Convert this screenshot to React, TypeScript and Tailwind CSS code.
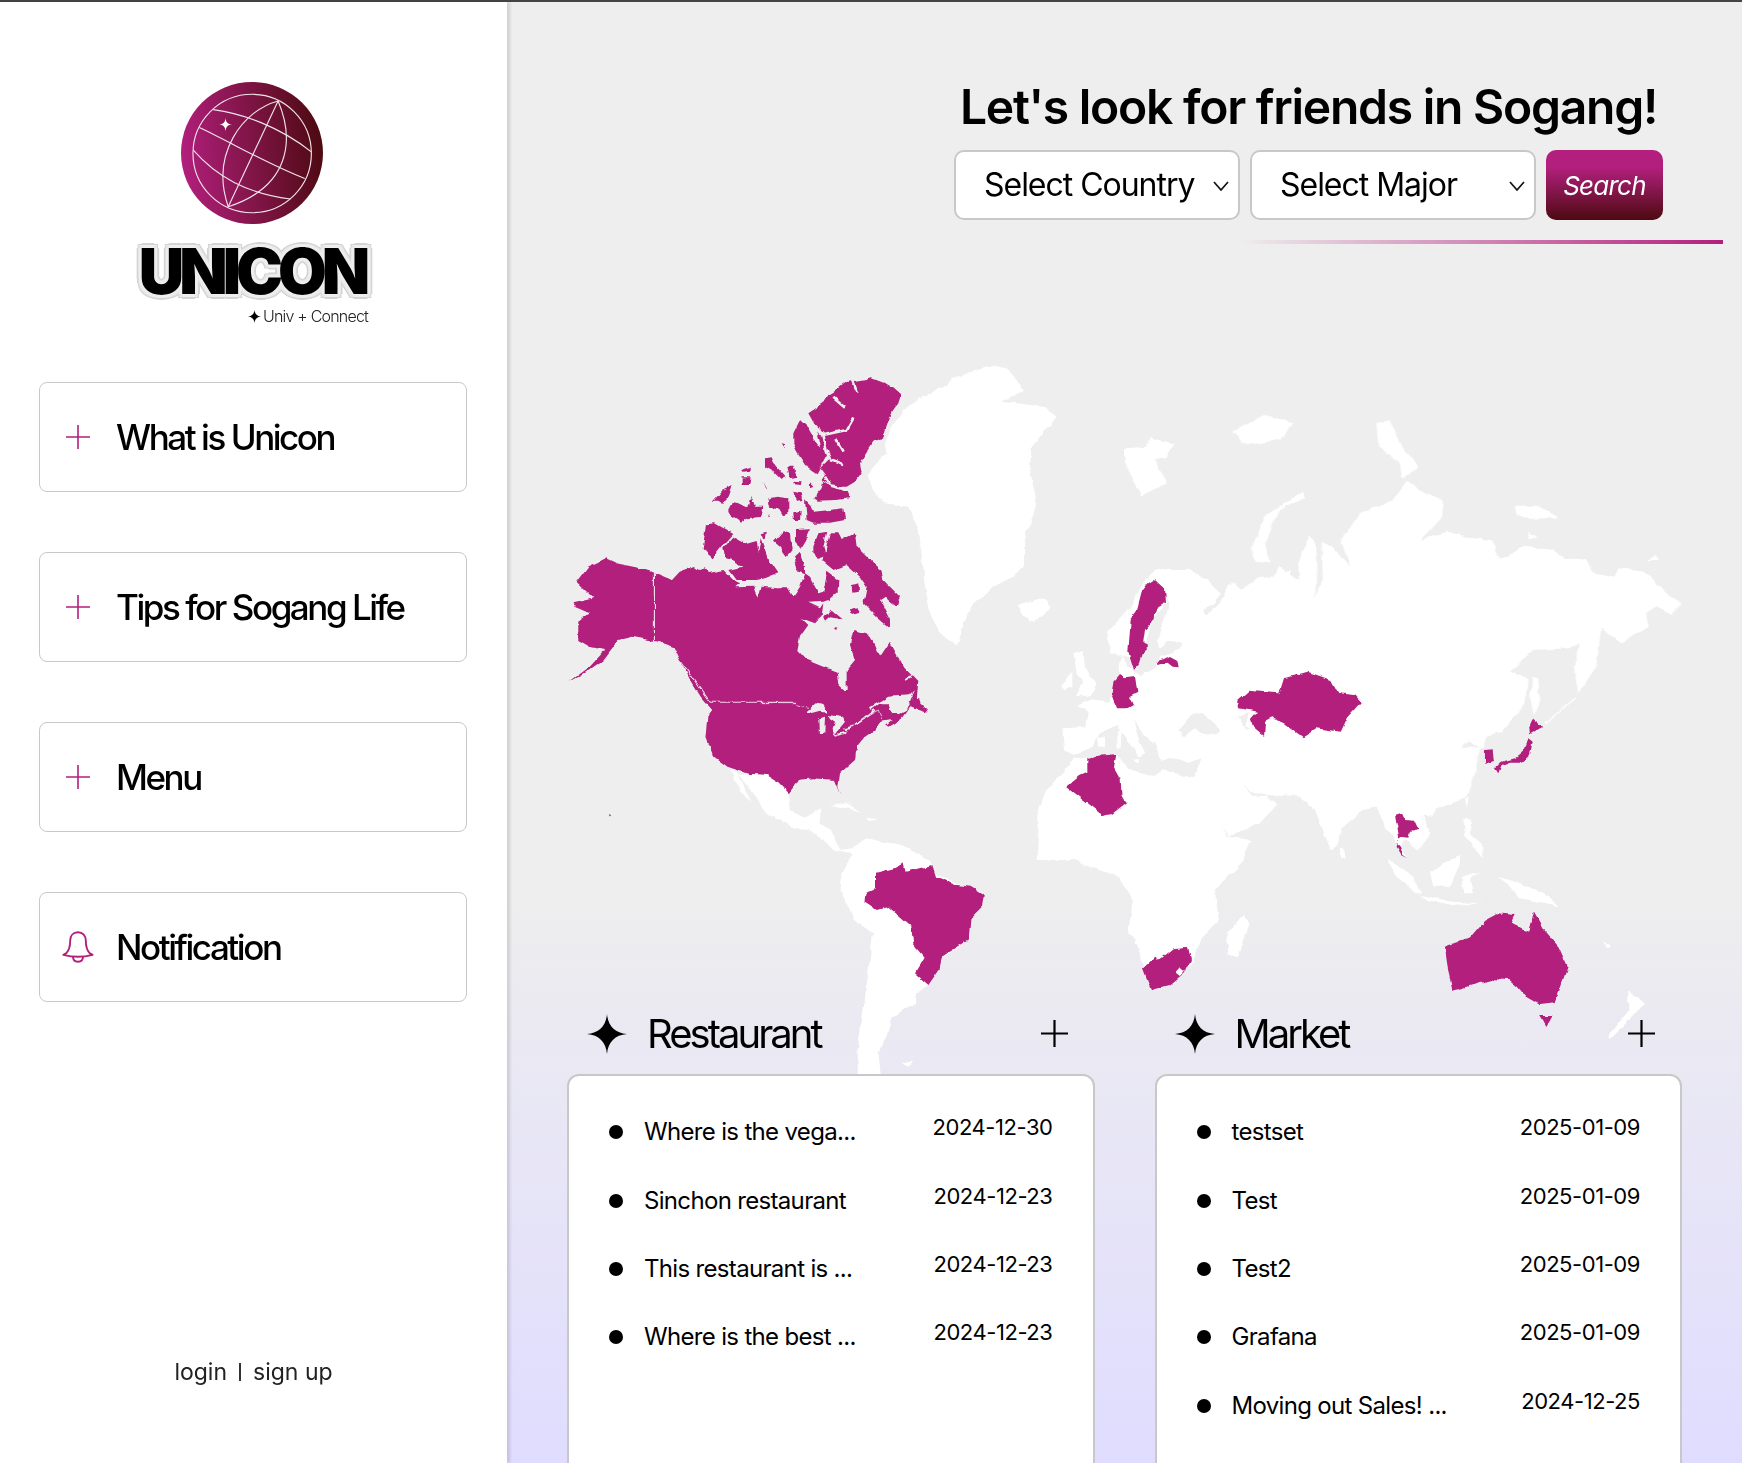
import React from 'react';

const FONT = "font-['Inter','Noto_Sans',sans-serif]";
const MAGENTA = '#b21f7d';
const BG = '#eeeeee';

const NAV = [
  { label: 'What is Unicon', icon: 'plus' },
  { label: 'Tips for Sogang Life', icon: 'plus' },
  { label: 'Menu', icon: 'plus' },
  { label: 'Notification', icon: 'bell' },
];

const RESTAURANT = [
  ['Where is the vega...', '2024-12-30'],
  ['Sinchon restaurant', '2024-12-23'],
  ['This restaurant is ...', '2024-12-23'],
  ['Where is the best ...', '2024-12-23'],
];

const MARKET = [
  ['testset', '2025-01-09'],
  ['Test', '2025-01-09'],
  ['Test2', '2025-01-09'],
  ['Grafana', '2025-01-09'],
  ['Moving out Sales! ...', '2024-12-25'],
];

const Star = ({ className }: { className: string }) => (
  <svg viewBox="0 0 40 40" className={className} fill="currentColor">
    <path d="M20 0C21 12 28 19 40 20 28 21 21 28 20 40 19 28 12 21 0 20 12 19 19 12 20 0Z" />
  </svg>
);

const Cross = ({ className, size = 24, weight = 1.6 }: { className: string; size?: number; weight?: number }) => (
  <svg viewBox={`0 0 ${size} ${size}`} width={size} height={size} className={className} stroke="currentColor" strokeWidth={weight}>
    <path d={`M${size / 2} 0V${size}M0 ${size / 2}H${size}`} />
  </svg>
);

const BellIcon = () => (
  <svg viewBox="0 0 32 32" width="32" height="32" fill="none" stroke={MAGENTA} strokeWidth="1.9" strokeLinejoin="round">
    <path d="M16 1.2c-4.9 0-7.8 3.6-7.8 8.3 0 5.7-1.3 10-3.8 12.6l-3 1.8c5 1.3 9.8 1.9 14.6 1.9s9.6-.6 14.6-1.9l-3-1.8c-2.5-2.6-3.8-6.9-3.8-12.6 0-4.7-2.9-8.3-7.8-8.3z" />
    <path d="M11 25.8c0 3.4 2.2 5 5 5s5-1.6 5-5" />
  </svg>
);

const Logo = () => (
  <div className="flex flex-col items-center pr-[3px]">
    <svg viewBox="183 35 427 427" width="142" height="142">
      <defs>
        <linearGradient id="globe" x1="0" y1="0.55" x2="1" y2="0.45">
          <stop offset="0" stopColor="#b21f7d" />
          <stop offset="1" stopColor="#4d0a10" />
        </linearGradient>
      </defs>
      <circle cx="396.5" cy="248.5" r="213.5" fill="url(#globe)" />
      <g fill="none" stroke="#f1e4ec" strokeWidth="3.4">
        <circle cx="397" cy="250" r="178" />
        <path d="M475 92 325 410" />
        <path d="M475 92C370 120 270 250 325 410" />
        <path d="M475 92C525 210 510 350 325 410" />
        <path d="M280 118C370 130 480 170 575 245" />
        <path d="M238 172C340 220 440 280 555 325" />
        <path d="M220 240C290 320 380 370 512 387" />
      </g>
      <path d="M317 143C318 156 324 162 337 163 324 164 318 170 317 183 316 170 310 164 297 163 310 162 316 156 317 143Z" fill="#fff" />
    </svg>
    <div className="mt-[16px] text-[63px] leading-[62px] font-black text-black tracking-[-0.08em] [text-shadow:3px_0_0_#eee,-3px_0_0_#eee,0_3px_0_#eee,0_-3px_0_#eee,3px_3px_0_#e8e8e8,-3px_3px_0_#e8e8e8,3px_-3px_0_#e8e8e8,-3px_-3px_0_#e8e8e8,5px_0_0_#d4d4d4,-5px_0_0_#d4d4d4,0_5px_0_#d4d4d4,0_-5px_0_#d4d4d4,4px_4px_0_#d4d4d4,-4px_4px_0_#d4d4d4,4px_-4px_0_#d4d4d4,-4px_-4px_0_#d4d4d4]">
      UNICON
    </div>
    <div className="mt-[4px] ml-[112px] flex items-center text-[16px] leading-[20px] font-light tracking-[-0.05em] text-[#222]">
      <Star className="mr-[2px] h-[13px] w-[13px] text-black" />
      Univ + Connect
    </div>
  </div>
);

const Sidebar = () => (
  <aside className="relative z-10 flex w-[507px] shrink-0 flex-col bg-white shadow-[3px_0_3px_rgba(0,0,0,0.12)]">
    <div className="pt-[80px]">
      <Logo />
    </div>
    <nav className="mt-[56px] flex flex-col gap-[60px] pl-[39px] pr-[40px]">
      {NAV.map(item => (
        <div key={item.label} className="flex h-[110px] items-center rounded-[8px] border border-[#c8c8c8] bg-white">
          <div className="flex w-[76px] justify-center">
            {item.icon === 'plus' ? <Cross className="text-[#b21f7d]" /> : <BellIcon />}
          </div>
          <span className="text-[35px] font-medium tracking-[-0.07em] text-black">{item.label}</span>
        </div>
      ))}
    </nav>
    <div className="mt-auto mb-[77px] flex items-center justify-center gap-[12px] text-[23px] leading-[28px] text-[#222]">
      <span>login</span>
      <span className="h-[18px] w-[2px] bg-[#333]" />
      <span>sign up</span>
    </div>
  </aside>
);

// land and highlighted countries, traced in separate local grids for each part of the map
const WorldMap = () => (
  <svg viewBox="507 0 1235 1075" width="1235" height="1075" className="absolute left-0 -top-[2px]" strokeLinejoin="round">
    <defs>
      {/* roughens the coast lines a little */}
      <filter id="coast" filterUnits="userSpaceOnUse" x="507" y="0" width="1235" height="1075" colorInterpolationFilters="sRGB">
        <feTurbulence type="fractalNoise" baseFrequency="0.09" numOctaves="3" seed="4" result="noise" />
        <feDisplacementMap in="SourceGraphic" in2="noise" scale="5" xChannelSelector="R" yChannelSelector="G" />
      </filter>
    </defs>
    <g filter="url(#coast)">
      {/* Greenland, Iceland, west of North America */}
      <g transform="translate(540 350) scale(0.3827 0.3333)">
        <path fill="#fff" d="M1185 45 1225 60 1240 85 1265 125 1205 155 1285 165 1320 175 1350 200 1320 240 1285 290 1280 360 1295 440 1290 500 1265 560 1265 650 1235 680 1185 710 1130 765 1115 790 1090 885 1050 860 1020 790 1005 700 1000 640 990 540 965 470 900 460 870 420 855 370 905 310 900 270 950 180 1000 140 1065 105 1075 85 1130 65Z" />
        <path fill="#fff" d="M1245 765 1310 745 1335 775 1290 815 1260 795Z" />
        <path fill={MAGENTA} d="M172 625 200 640 250 652 300 668 345 690 365 665 405 648 425 672 470 672 505 695 512 715 560 712 572 745 580 735 650 745 650 1020 830 1020 830 1200 700 1270 670 1300 650 1330 625 1300 590 1275 545 1272 490 1250 455 1220 435 1165 440 1095 450 1080 420 1040 390 985 350 890 310 875 240 860 205 870 165 930 110 975 75 997 130 950 170 900 130 890 100 870 100 815 130 790 90 770 85 760 140 745 95 695 125 650Z" />
        <path fill={MAGENTA} d="M180 1392 186 1396 182 1400Z" />
      </g>

      {/* Canadian arctic and Hudson Bay */}
      <g transform="translate(690 370) scale(0.3333)" fill={MAGENTA}>
        <path d="M0 610 15 590 30 600 45 595 50 610 100 600 130 630 150 640 135 652 190 650 205 685 215 650 260 655 295 655 310 680 330 650 345 610 360 620 375 650 385 670 400 665 412 605 445 630 443 665 415 690 400 695 355 698 390 715 400 700 395 740 375 760 335 745 355 765 330 800 322 840 350 870 400 890 440 905 445 945 470 970 470 900 495 870 480 825 490 780 530 790 555 825 570 860 600 815 640 890 685 935 680 990 55 990 0 925Z" />
        <path d="M400 745 425 722 455 748 420 742 405 755Z M428 772 442 765 438 776Z" />
        <path d="M48 463 75 460 130 492 100 525 68 565 38 538Z M100 535 130 500 165 520 200 510 205 550 212 505 235 570 262 610 225 625 200 630 140 630 118 600 160 590 125 570 105 565Z M252 515 285 480 300 490 305 540 290 558 270 530Z M318 480 360 478 345 510 330 535 318 510Z M310 565 330 545 345 590 345 610 320 600Z M212 490 230 485 228 505 220 508Z" />
        <path d="M65 395 95 360 125 345 115 375 100 405 85 395Z M115 425 125 395 145 400 175 415 185 378 195 410 220 410 215 440 175 445 150 460 145 450 115 430Z M225 265 245 262 255 285 285 320 275 330 250 305 225 290Z M292 290 310 290 322 320 300 325Z M155 300 185 290 185 305 160 308Z M155 322 182 322 178 345 155 345Z M220 335 232 358 228 355Z M310 335 338 337 335 345 312 343Z M360 340 370 350 360 355Z M275 220 285 222 285 235Z" />
        <path d="M370 385 395 355 400 335 420 350 470 365 478 385 440 390 380 392Z M305 365 335 370 340 390 318 392Z M235 385 265 380 295 385 295 430 280 440 265 415 240 410Z M310 430 332 425 330 450 312 450Z M345 385 365 405 372 425 420 420 460 415 465 450 420 458 370 458 350 450Z M235 430 240 438 232 438Z" />
        <path d="M370 530 385 490 412 485 400 530 410 560 380 570 370 550Z M420 490 445 490 455 510 495 490 500 530 540 570 575 600 580 630 630 680 620 710 600 695 585 680 570 690 600 750 600 775 560 740 540 720 520 700 530 650 510 620 470 585 430 600 400 575 405 555 410 525Z M488 645 505 640 507 665 490 668Z M480 718 500 712 510 728 485 735Z" />
        <path d="M500 35 530 30 545 25 585 40 610 55 633 75 625 100 590 150 565 155 600 140 580 200 550 215 510 280 515 305 495 335 470 350 450 350 420 345 395 330 405 315 390 295 420 265 395 240 380 175 355 130 400 100 415 75 440 60 465 40Z M310 190 330 150 355 175 380 220 410 255 380 310 365 300 345 285 320 245 310 225Z" />
        <path fill="none" stroke={BG} strokeWidth="8" d="M370 165 400 195 410 240 420 268M400 195 470 180 490 145M435 205 458 245M420 270 460 285M430 80 465 110M490 35 500 65M405 320 420 345" />
      </g>

      {/* east of North America */}
      <g transform="translate(760 590) scale(0.3333)">
        <path fill={MAGENTA} d="M0 325 475 325 480 340 500 358 503 368 470 358 448 352 425 385 385 410 378 405 395 390 365 395 345 420 310 445 290 470 285 510 240 550 235 590 245 618 225 570 160 565 115 570 85 607 60 580 30 570 0 545Z" />
        <path fill={BG} d="M138 368 170 340 190 345 205 368 180 365 155 372Z M178 385 195 380 193 432 180 432Z M205 375 250 382 255 395 235 420 222 438 218 415 225 395 210 385Z M222 435 265 420 250 432 225 440Z M253 412 285 403 270 415 255 418Z M330 352 385 320 450 316 465 300 445 345 438 362 420 372 395 370 385 340 360 340 335 360Z" />
        <path fill="none" stroke={BG} strokeWidth="5" d="M285 403 325 375 345 360M435 270 460 255" />
        <path fill="none" stroke="#f4d9ea" strokeWidth="2.4" d="M0 338H110L115 345 150 352M290 398 320 380 355 360 365 388" />
      </g>

      {/* west border lines */}
      <g transform="translate(540 350) scale(0.3827 0.3333)">
        <path fill="none" stroke="#f4d9ea" strokeWidth="3" d="M299 668V875L340 890 385 960 445 1057H670" />
      </g>

      {/* Asia north */}
      <g transform="translate(1000 350) scale(0.4733 0.3333)" fill="#fff">
        <path d="M430 800 470 760 490 695 510 720 545 685 580 680 590 650 632 690 630 640 655 555 668 580 672 690 662 745 682 690 680 575 700 590 740 650 720 570 760 490 830 450 860 395 895 430 935 450 935 500 890 570 945 545 1000 565 1040 570 1055 630 1110 590 1170 600 1195 630 1240 630 1250 665 1300 680 1310 655 1360 665 1410 730 1440 760 1420 795 1385 770 1365 790 1370 830 1310 880 1270 835 1265 900 1260 950 1222 1030 1212 950 1225 880 1205 895 1125 900 1080 965 1115 985 1110 1060 1060 1145 1000 1170 970 1190 1015 1190 1000 1290 985 1340 920 1380 905 1400 800 1370 600 1300 430 1200 400 900Z" />
        <path d="M265 295 310 290 320 265 370 280 350 325 325 330 355 400 335 410 300 440 265 340Z M490 245 560 195 620 220 590 270 520 285Z M530 600 560 500 640 425 645 445 590 480 560 580 570 640 540 635Z M795 220 825 210 850 290 885 350 850 385 845 340 800 290Z M1090 470 1140 470 1180 505 1120 510 1090 490Z M1115 545 1135 560 1115 565Z M1365 630 1385 615 1390 630Z M1125 980 1135 985 1140 1060 1128 1100 1120 1040Z" />
        <path fill="none" stroke="#fff" strokeWidth="3" d="M1150 1120 1220 1040" />
      </g>

      {/* Latin America and west Africa */}
      <g transform="translate(540 750) scale(0.3827 0.3333)">
        <path fill="#fff" d="M520 75 545 72 590 75 625 100 650 130 652 180 690 205 735 175 730 220 760 240 785 300 815 295 850 265 945 285 1020 330 1030 370 1100 405 1160 430 1155 470 1125 505 1120 570 1050 625 1020 700 985 730 980 760 920 800 905 860 885 910 890 972 830 972 830 900 850 740 870 550 820 510 785 420 790 370 820 310 770 300 720 250 660 230 590 190 560 130Z" />
        <path fill="#fff" d="M498 60 515 70 555 158 525 130Z M760 165 800 160 840 190 800 175Z M850 200 885 205 860 210Z M945 940 975 935 965 950Z" />
        <path fill="#fff" d="M1375 105 1310 180 1305 250 1360 325 1440 325 1510 345 1530 400 1568 480 1700 480 1650 80 1400 50Z" />
        <path fill={MAGENTA} d="M878 368 925 355 950 340 955 365 1025 345 1035 380 1090 405 1125 410 1160 435 1155 470 1125 505 1120 570 1050 620 1045 655 1015 705 980 670 1005 620 975 580 970 530 950 510 910 470 880 480 848 455 850 430 878 415Z" />
      </g>

      {/* Africa east, Australia, New Zealand */}
      <g transform="translate(1100 750) scale(0.4095 0.3333)">
        <path fill="#fff" d="M215 80 295 250 315 268 370 270 340 350 280 420 290 510 250 560 225 640 180 700 125 720 90 590 70 540 80 450 45 380 -50 340 -100 90 50 90Z" />
        <path fill="#fff" d="M1290 720 1330 760 1300 800 1245 870 1245 850 1290 780Z M1225 570 1250 590 1240 595Z" />
        <path fill={MAGENTA} fillRule="evenodd" d="M180 595 215 590 222 630 205 670 170 705 125 720 105 655 135 620 145 630Z M195 655 205 665 195 678 185 668Z" />
        <path fill={MAGENTA} d="M970 490 1015 495 1005 520 1048 545 1060 485 1085 540 1120 590 1142 650 1125 710 1110 760 1075 765 1040 740 1020 710 1000 690 965 688 895 710 860 722 848 640 842 590 905 560 940 510Z M1075 795 1105 795 1090 828Z" />
      </g>

      {/* Europe, Mediterranean, Arabia */}
      <g transform="translate(1030 570) scale(0.3333)">
        <path fill="#fff" d="M25 720 50 660 95 615 130 565 170 570 262 552 290 595 370 620 400 600 490 625 540 710 590 800 660 810 640 870 20 870 25 780Z" />
        <path fill="#fff" d="M100 475 165 470 175 425 145 408 185 388 240 395 248 340 268 318 262 285 275 258 298 295 335 315 380 290 385 262 430 250 458 218 415 210 385 235 380 212 395 170 418 105 405 60 375 0 480 0 530 30 570 70 552 100 520 115 530 140 575 90 598 40 640 70 690 30 780 0 780 680 715 675 660 672 635 632 660 680 710 680 745 705 690 760 595 800 530 710 490 625 515 565 470 575 420 560 395 570 375 515 355 515 310 450 330 520 345 545 330 560 270 480 265 465 210 490 185 530 130 555 105 540Z" />
        <path fill="#fff" d="M232 185 300 110 340 40 375 0 405 35 410 100 365 150 345 235 310 300 298 260 265 255 240 250Z M90 345 130 305 130 345 100 362Z M130 250 160 240 165 290 200 345 175 380 135 380 160 335 140 310Z M262 480 275 478 272 530 262 530Z M305 565 330 565 325 578Z M200 505 225 500 225 530 205 530Z M0 100 45 85 60 115 0 155Z" />
        <path fill={BG} d="M445 480 480 440 520 430 545 450 570 490 520 495 495 475 460 500Z M625 440 655 430 650 470 680 520 685 545 650 550 640 510 655 490Z" />
        <path fill={MAGENTA} d="M375 27 405 55 408 98 385 112 368 150 345 180 340 215 358 228 340 245 330 280 312 300 295 245 302 150 318 130 335 65 355 40Z M383 272 400 268 420 258 442 270 446 292 425 290 410 278 385 285Z M270 312 285 322 315 318 322 368 300 380 312 405 295 415 258 415 244 375 250 335Z M172 570 205 557 262 552 255 595 272 625 275 685 293 695 245 733 220 738 107 650 150 615 172 605Z" />
      </g>

      {/* south and east Asia */}
      <g transform="translate(1200 730) scale(0.3333)">
        <path fill="#fff" d="M130 0 130 150 160 180 195 185 300 200 345 240 395 365 408 350 425 295 490 240 530 230 555 290 580 320 595 360 625 385 600 350 615 325 650 360 695 315 660 240 720 230 790 190 810 140 775 60 800 35 850 55 870 0Z" />
        <path fill="#fff" d="M690 240 705 245 695 262Z M795 205 810 200 800 235Z M790 265 815 265 810 310 850 350 850 385 815 340 795 320Z M690 425 760 385 780 375 780 400 750 470 700 470Z M560 385 640 440 665 490 650 490 590 440Z M660 495 760 515 850 520 760 525 680 510Z M785 440 840 425 810 450 820 490 790 490Z M890 440 950 455 1030 490 1080 530 1040 520 960 505 930 470Z M420 352 435 365 435 385 420 382Z M135 555 145 580 115 680 85 675 80 610Z" />
        <path fill={MAGENTA} d="M585 255 605 248 615 270 645 272 658 300 630 305 625 320 605 318 590 340 600 350 610 375 625 385 605 375 590 350 597 320 592 290Z M855 60 878 58 882 90 855 98Z M985 25 998 35 990 75 965 95 930 95 905 105 895 130 885 115 905 95 945 85 975 60Z" />
      </g>

      {/* Kazakhstan and Hokkaido */}
      <g transform="translate(1000 350) scale(0.4733 0.3333)" fill={MAGENTA}>
        <path d="M503 1050 525 1022 590 1030 600 985 650 965 700 990 715 1030 750 1035 763 1055 735 1100 720 1145 670 1135 640 1162 600 1120 575 1105 560 1115 558 1158 535 1130 530 1110 545 1085 505 1075Z M1125 1108 1145 1130 1120 1150 1118 1130Z" />
      </g>
    </g>
  </svg>
);

const Board = ({ title, rows }: { title: string; rows: string[][] }) => (
  <section className="flex flex-col">
    <div className="flex h-[47px] items-center pl-[20px] pr-[27px]">
      <Star className="h-[40px] w-[40px] text-black" />
      <h2 className="ml-[20px] text-[40px] font-normal tracking-[-0.074em] text-black">{title}</h2>
      <Cross className="ml-auto text-black" size={27} weight={2.2} />
    </div>
    <div className="mt-[17px] h-[430px] rounded-[12px] border-2 border-[#c8c8c8] bg-white pl-[40px] pr-[40px] pt-[22px]">
      <ul>
        {rows.map(([text, date]) => (
          <li key={text} className="flex h-[68.4px] items-center">
            <span className="h-[14px] w-[14px] shrink-0 rounded-full bg-black" />
            <span className="ml-[21px] text-[24px] tracking-[-0.028em] text-black">{text}</span>
            <span className="ml-auto -mt-[9px] text-[22px] tracking-[-0.02em] text-black">{date}</span>
          </li>
        ))}
      </ul>
    </div>
  </section>
);

const Dropdown = ({ label }: { label: string }) => (
  <div className="relative">
    <select className="h-[70px] w-[286px] appearance-none rounded-[10px] border-2 border-[#c8c8c8] bg-white pl-[28px] text-[32px] tracking-[-0.032em] text-black">
      <option>{label}</option>
    </select>
    <svg viewBox="0 0 16 10" width="16" height="10" className="pointer-events-none absolute right-[11px] top-[31px]" fill="none" stroke="#111" strokeWidth="1.7">
      <path d="M1 1 8 9 15 1" />
    </svg>
  </div>
);

const App: React.FC = () => {
  return (
    <div className={`flex h-screen flex-col overflow-hidden bg-white ${FONT}`}>
      <div className="h-[2px] shrink-0 bg-[#444]" />
      <div className="flex min-h-0 flex-1">
        <Sidebar />
        <main className="relative flex-1 bg-[linear-gradient(180deg,#eeeeee_60%,#e0dcff_100%)]">
          <WorldMap />
          <div className="relative">
            {/* search header */}
            <div className="flex flex-col items-center pl-[447px] pr-[79px] pt-[72px]">
              <h1 className="whitespace-nowrap text-[48px] leading-[66px] font-semibold tracking-[-0.026em] text-black">
                Let's look for friends in Sogang!
              </h1>
              <div className="mt-[10px] flex gap-[10px]">
                <Dropdown label="Select Country" />
                <Dropdown label="Select Major" />
                <button className="h-[70px] w-[117px] rounded-[10px] bg-[linear-gradient(180deg,#b21f7d_0%,#b21f7d_25%,#4d0a10_100%)] text-[26px] font-normal italic tracking-[-0.03em] text-white">
                  Search
                </button>
              </div>
            </div>
            <div className="ml-[733px] mt-[20px] h-[4px] w-[483px] bg-[linear-gradient(90deg,rgba(178,31,125,0)_0%,#b21f7d_100%)]" />

            {/* boards */}
            <div className="ml-[60px] mt-[766px] grid w-[1115px] grid-cols-2 gap-[60px]">
              <Board title="Restaurant" rows={RESTAURANT} />
              <Board title="Market" rows={MARKET} />
            </div>
          </div>
        </main>
      </div>
    </div>
  );
};

export default App;
